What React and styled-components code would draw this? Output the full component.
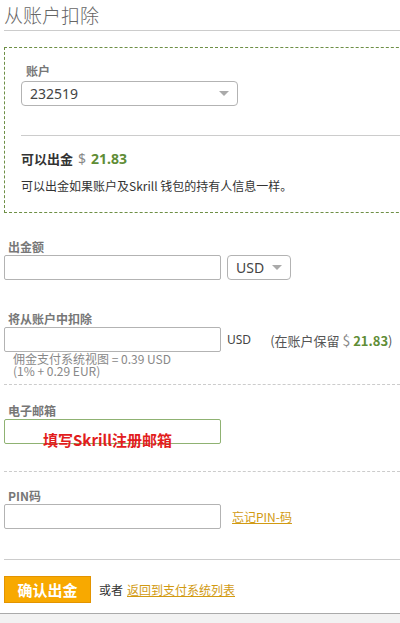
import React from "react";
import styled, { createGlobalStyle } from "styled-components";

const Global = createGlobalStyle`
  html, body { margin: 0; padding: 0; background: #fff; }
  body { font-family: "Noto Sans", "Noto Sans CJK SC", sans-serif; color: #333; }
`;

const Page = styled.div`
  width: 400px;
  overflow: hidden;
  padding-left: 4px;
  box-sizing: border-box;
`;

const Title = styled.h2`
  margin: 0;
  height: 31px;
  box-sizing: border-box;
  padding-top: 3px;
  font-size: 19px;
  line-height: 24px;
  font-weight: 300;
  color: #666;
  border-bottom: 1px solid #ccc;
  font-family: "Noto Sans CJK SC", sans-serif;
`;

const Box = styled.div`
  margin-top: 16px;
  width: 420px;
  height: 166px;
  box-sizing: border-box;
  border: 1px dashed #6d8f45;
  padding: 16px 0 0 16px;
`;

const Label = styled.div`
  font-family: "Noto Sans CJK SC", sans-serif;
  font-weight: 700;
  font-size: 12px;
  line-height: 14px;
  color: #777;
  padding-left: ${(p) => p.$indent || 4}px;
  margin-top: ${(p) => p.$mt || 0}px;
`;

const SelectBox = styled.div`
  width: ${(p) => p.$w}px;
  height: 25px;
  box-sizing: border-box;
  border: 1px solid #b3b3b3;
  border-radius: 4px;
  display: flex;
  align-items: center;
  justify-content: space-between;
  padding: 0 8px 0 8px;
  font-size: 14px;
  color: #444;
  margin-top: ${(p) => p.$mt || 0}px;
  background: #fff;
`;

const Arrow = styled.span`
  width: 0;
  height: 0;
  border-left: 5px solid transparent;
  border-right: 5px solid transparent;
  border-top: 5px solid #aaa;
`;

const InnerRule = styled.div`
  margin-top: 29px;
  border-top: 1px solid #ccc;
`;

const Available = styled.div`
  margin-top: 14px;
  display: flex;
  align-items: baseline;
  gap: 5px;
  font-size: 13px;
  line-height: 18px;
`;

const Strong = styled.span`
  font-family: "Noto Sans CJK SC", sans-serif;
  font-weight: 700;
  color: #333;
`;

const Dollar = styled.span`
  color: #888;
  font-size: 14px;
`;

const Money = styled.span`
  color: #5f8d36;
  font-weight: 700;
  font-size: ${(p) => p.$size || 14}px;
`;

const Note = styled.div`
  margin-top: 10px;
  font-size: 12px;
  line-height: 16px;
  color: #333;
  font-family: "Noto Sans CJK SC", sans-serif;
`;

const Section = styled.div`
  padding-top: ${(p) => p.$pt}px;
  height: ${(p) => p.$h}px;
  box-sizing: border-box;
  border-top: ${(p) => (p.$line ? `1px ${p.$line} #ccc` : "none")};
`;

const Row = styled.div`
  display: flex;
  align-items: center;
  gap: 6px;
  margin-top: 1px;
  position: relative;
`;

const Input = styled.div`
  width: 217px;
  height: 25px;
  box-sizing: border-box;
  border: 1px solid ${(p) => p.$border || "#b3b3b3"};
  border-radius: 2px;
  background: #fff;
`;

const Unit = styled.span`
  font-size: 12px;
  color: #444;
`;

const Keep = styled.span`
  margin-left: 13px;
  font-size: 13px;
  color: #555;
  font-family: "Noto Sans CJK SC", sans-serif;
`;

const Fee = styled.div`
  padding-left: 9px;
  font-size: 12px;
  line-height: 12px;
  color: #888;
  margin-top: 1px;
  font-family: "Noto Sans CJK SC", sans-serif;
`;

const Hint = styled.span`
  position: absolute;
  left: 39px;
  top: 10px;
  font-size: 15px;
  font-weight: 700;
  color: #e21d1d;
  font-family: "Noto Sans CJK SC", sans-serif;
`;

const Link = styled.a`
  color: #d19a12;
  text-decoration: underline;
  font-size: 12px;
  line-height: ${(p) => p.$lh || "normal"};
  font-family: "Noto Sans CJK SC", sans-serif;
  cursor: pointer;
  margin-left: ${(p) => p.$ml || 0}px;
`;

const Actions = styled.div`
  display: flex;
  align-items: flex-start;
  gap: 8px;
  height: 54px;
  box-sizing: border-box;
  padding-top: 16px;
  border-top: 1px solid #ccc;
`;

const Button = styled.button`
  width: 87px;
  height: 27px;
  box-sizing: border-box;
  background: #f8a900;
  border: 1px solid #e39400;
  color: #fff;
  font-weight: 700;
  font-size: 15px;
  font-family: "Noto Sans CJK SC", sans-serif;
  padding: 0;
  line-height: 25px;
`;

const Or = styled.span`
  font-size: 12px;
  color: #333;
  line-height: 27px;
  font-family: "Noto Sans CJK SC", sans-serif;
`;

const Footer = styled.div`
  margin-left: -4px;
  height: 20px;
  background: #f2f2f2;
  border-top: 1px solid #aaa;
`;

export default function App() {
  return (
    <>
      <Global />
      <Page>
        <Title>从账户扣除</Title>
        <Box>
          <Label $indent={5}>账户</Label>
          <SelectBox $w={217} $mt={3}>
            <span>232519</span>
            <Arrow />
          </SelectBox>
          <InnerRule />
          <Available>
            <Strong>可以出金</Strong>
            <Dollar>$</Dollar>
            <Money>21.83</Money>
          </Available>
          <Note>可以出金如果账户及Skrill 钱包的持有人信息一样。</Note>
        </Box>
        <Section $pt={27} $h={171}>
          <Label>出金额</Label>
          <Row>
            <Input />
            <SelectBox $w={64}>
              <span>USD</span>
              <Arrow />
            </SelectBox>
          </Row>
          <Label $mt={32}>将从账户中扣除</Label>
          <Row>
            <Input />
            <Unit>USD</Unit>
            <Keep>
              (在账户保留 <Dollar>$</Dollar> <Money $size={13}>21.83</Money>)
            </Keep>
          </Row>
          <Fee>
            佣金支付系统视图 = 0.39 USD
            <br />
            (1% + 0.29 EUR)
          </Fee>
        </Section>
        <Section $pt={19} $h={87} $line="dashed">
          <Label>电子邮箱</Label>
          <Row>
            <Input $border="#8fb272" />
            <Hint>填写Skrill注册邮箱</Hint>
          </Row>
        </Section>
        <Section $pt={17} $h={88} $line="dashed">
          <Label>PIN码</Label>
          <Row>
            <Input />
            <Link $ml={5}>忘记PIN-码</Link>
          </Row>
        </Section>
        <Actions>
          <Button>确认出金</Button>
          <Or>或者</Or>
          <Link $lh="27px" $ml={-4}>返回到支付系统列表</Link>
        </Actions>
        <Footer />
      </Page>
    </>
  );
}
